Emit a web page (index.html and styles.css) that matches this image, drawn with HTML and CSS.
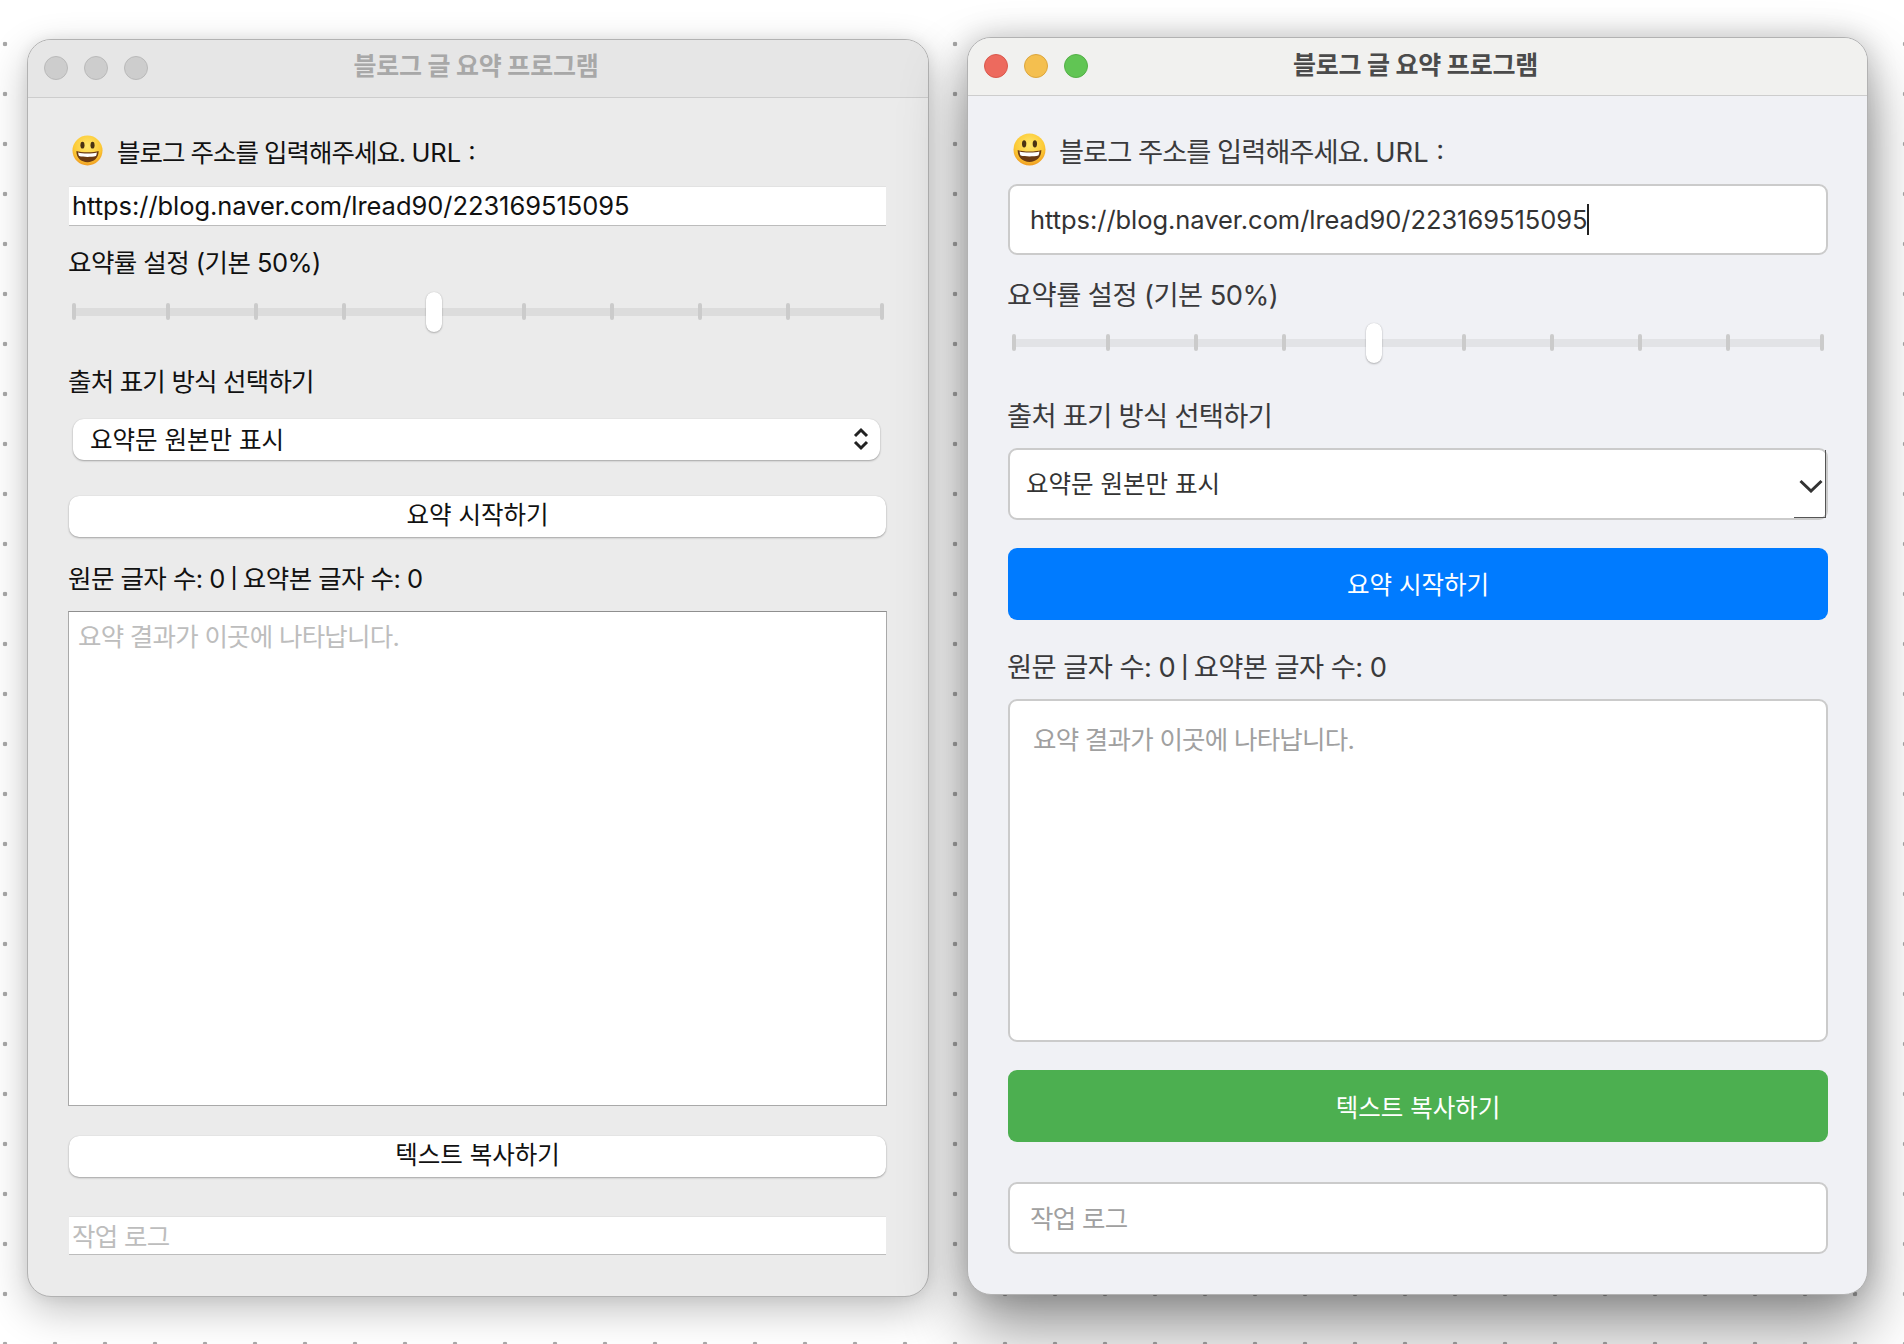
FILE: index.html
```html
<!DOCTYPE html>
<html lang="ko">
<head>
<meta charset="utf-8">
<title>블로그 글 요약 프로그램</title>
<link rel="stylesheet" href="styles.css">
</head>
<body>
<main class="desk">
  <section class="win win-a">
    <header class="bar">
      <div class="lights"><i class="light"></i><i class="light"></i><i class="light"></i></div>
      <h1 class="title">블로그 글 요약 프로그램</h1>
    </header>
    <div class="body">
      <div class="label-row url-label">
        <svg class="emoji" viewBox="0 0 32 32"><defs><radialGradient id="fa" cx=".5" cy=".35" r=".7"><stop offset="0" stop-color="#ffe86b"/><stop offset=".65" stop-color="#fcc935"/><stop offset="1" stop-color="#ec8f1c"/></radialGradient></defs><circle cx="16" cy="16" r="15.5" fill="url(#fa)"/><ellipse cx="10.8" cy="10.5" rx="2.1" ry="3.5" fill="#4a3313"/><ellipse cx="21.2" cy="10.5" rx="2.1" ry="3.5" fill="#4a3313"/><path d="M4.5 16.5C9 18.4 23 18.4 27.5 16.5 27.6 23.6 22.6 28 16 28S4.4 23.6 4.5 16.5Z" fill="#6b3a12"/><path d="M6.4 18C10 19.3 22 19.3 25.6 18 25.5 19.8 25.2 20.8 24.6 21.8 20 23 12 23 7.4 21.8 6.8 20.8 6.5 19.8 6.4 18Z" fill="#fff"/></svg>
        <span>블로그 주소를 입력해주세요. <span class="latin">URL :</span></span>
      </div>
      <input class="field url" type="text" value="https://blog.naver.com/lread90/223169515095">
      <div class="label-row rate-label">요약률 설정 (기본 50%)</div>
      <div class="slider">
        <div class="track"></div>
        <div class="ticks"><i class="tick"></i><i class="tick"></i><i class="tick"></i><i class="tick"></i><i class="tick"></i><i class="tick"></i><i class="tick"></i><i class="tick"></i><i class="tick"></i><i class="tick"></i></div>
        <div class="thumb"></div>
      </div>
      <div class="label-row source-label">출처 표기 방식 선택하기</div>
      <div class="select-wrap">
        <select class="select"><option>요약문 원본만 표시</option></select>
        <svg class="updown" viewBox="0 0 16 24"><path d="M2 9 8 3l6 6M2 15l6 6 6-6" fill="none" stroke="#222" stroke-width="3"/></svg>
      </div>
      <button class="btn start" type="button">요약 시작하기</button>
      <div class="label-row count">원문 글자 수: 0 <span class="pipe">|</span> 요약본 글자 수: 0</div>
      <textarea class="result" placeholder="요약 결과가 이곳에 나타납니다."></textarea>
      <button class="btn copy" type="button">텍스트 복사하기</button>
      <input class="field log" type="text" placeholder="작업 로그">
    </div>
  </section>

  <section class="win win-b">
    <header class="bar">
      <div class="lights"><i class="light red"></i><i class="light yellow"></i><i class="light green"></i></div>
      <h1 class="title">블로그 글 요약 프로그램</h1>
    </header>
    <div class="body">
      <div class="label-row url-label">
        <svg class="emoji" viewBox="0 0 32 32"><defs><radialGradient id="fb" cx=".5" cy=".35" r=".7"><stop offset="0" stop-color="#ffe86b"/><stop offset=".65" stop-color="#fcc935"/><stop offset="1" stop-color="#ec8f1c"/></radialGradient></defs><circle cx="16" cy="16" r="15.5" fill="url(#fb)"/><ellipse cx="10.8" cy="10.5" rx="2.1" ry="3.5" fill="#4a3313"/><ellipse cx="21.2" cy="10.5" rx="2.1" ry="3.5" fill="#4a3313"/><path d="M4.5 16.5C9 18.4 23 18.4 27.5 16.5 27.6 23.6 22.6 28 16 28S4.4 23.6 4.5 16.5Z" fill="#6b3a12"/><path d="M6.4 18C10 19.3 22 19.3 25.6 18 25.5 19.8 25.2 20.8 24.6 21.8 20 23 12 23 7.4 21.8 6.8 20.8 6.5 19.8 6.4 18Z" fill="#fff"/></svg>
        <span>블로그 주소를 입력해주세요. <span class="latin">URL :</span></span>
      </div>
      <div class="url-wrap">
        <input class="field url" type="text" value="https://blog.naver.com/lread90/223169515095">
        <i class="caret"></i>
      </div>
      <div class="label-row rate-label">요약률 설정 (기본 50%)</div>
      <div class="slider">
        <div class="track"></div>
        <div class="ticks"><i class="tick"></i><i class="tick"></i><i class="tick"></i><i class="tick"></i><i class="tick"></i><i class="tick"></i><i class="tick"></i><i class="tick"></i><i class="tick"></i><i class="tick"></i></div>
        <div class="thumb"></div>
      </div>
      <div class="label-row source-label">출처 표기 방식 선택하기</div>
      <div class="select-wrap">
        <select class="select"><option>요약문 원본만 표시</option></select>
        <i class="corner"></i>
        <svg class="chev" viewBox="0 0 24 14"><path d="M1.5 2 12 12 22.5 2" fill="none" stroke="#333" stroke-width="3"/></svg>
      </div>
      <button class="btn start" type="button">요약 시작하기</button>
      <div class="label-row count">원문 글자 수: 0 <span class="pipe">|</span> 요약본 글자 수: 0</div>
      <textarea class="result" placeholder="요약 결과가 이곳에 나타납니다."></textarea>
      <button class="btn copy" type="button">텍스트 복사하기</button>
      <input class="field log" type="text" placeholder="작업 로그">
    </div>
  </section>
</main>
</body>
</html>
```
FILE: styles.css
```css
* { box-sizing: border-box; }
html, body { margin: 0; height: 100%; overflow: hidden; }
body {
  background-color: #fff;
  background-image: radial-gradient(circle at 5px 44px, #a8a8a8 2px, transparent 2.6px);
  background-size: 50px 50px;
  font-family: "Inter", "Noto Sans CJK KR", sans-serif;
}
.desk { display: flex; align-items: flex-start; padding-left: 27px; }

.win { display: flex; flex-direction: column; border: 1px solid #b2b2b2; border-radius: 24px; overflow: hidden; position: relative; }
.win-a { width: 902px; height: 1258px; margin-top: 39px; background: #ebebeb; color: #111; box-shadow: 0 14px 40px rgba(0,0,0,.24), 0 0 14px rgba(0,0,0,.08); }
.win-b { width: 901px; height: 1258px; margin-top: 37px; margin-left: 38px; background: #f0f1f5; color: #3a3a3c; z-index: 1; box-shadow: 0 34px 64px rgba(0,0,0,.42), 0 0 30px rgba(0,0,0,.2); }

.bar { flex: none; height: 58px; display: flex; align-items: center; justify-content: center; position: relative; border-bottom: 1px solid #cdcdcd; }
.win-a .bar { background: #e6e6e6; }
.win-b .bar { background: #f1f1ef; }
.lights { position: absolute; left: 16px; top: 16px; display: flex; gap: 16px; }
.light { width: 24px; height: 24px; border-radius: 50%; background: #cdcdcd; border: 1px solid #b9b9b9; }
.light.red { background: #ed6a5e; border-color: #d9584c; }
.light.yellow { background: #f4bf4f; border-color: #dca63c; }
.light.green { background: #61c554; border-color: #53b046; }
.title { margin: -2px 4px 0 0; font-size: 25px; font-weight: 700; line-height: 1; letter-spacing: -.2px; }
.win-a .title { color: #a8a8a8; margin-top: -4px; }
.win-b .title { color: #4b4b4b; }

.body { flex: 1; display: flex; flex-direction: column; }
.win-a .body { padding: 38px 42px 0 41px; }
.win-b .body { padding: 38px 39px 0 40px; }

.label-row { height: 34px; display: flex; align-items: center; flex: none; white-space: nowrap; }
.win-a .label-row { font-size: 25.5px; padding-bottom: 5px; }
.win-b .label-row { font-size: 27.3px; padding-bottom: 3px; }
.url-label { letter-spacing: -1px; }
.latin { letter-spacing: 0; }
.rate-label, .source-label, .count { margin-left: -1px; }
.rate-label { letter-spacing: -.55px; }
.win-a .source-label { letter-spacing: -.8px; }
.win-b .source-label { letter-spacing: -.7px; }
.count { letter-spacing: -.55px; }
.pipe { display: inline-block; margin: 0 6px; font-family: "Liberation Sans", sans-serif; }
.emoji { flex: none; }
.win-a .emoji { width: 31px; height: 31px; margin: 0 14px 0 3px; }
.win-b .emoji { width: 33px; height: 33px; margin: 0 13px 0 5px; }

.field { display: block; width: 100%; flex: none; background: #fff; font: inherit; font-size: 25.5px; outline: 0; letter-spacing: -.05px; }
.field::placeholder { font: inherit; letter-spacing: -.7px; }
.win-a .field { border: 0; border-bottom: 1px solid #bcbcbc; border-top: 1px solid #e2e2e2; padding: 0 3px 2px; color: #111; }
.win-a .field::placeholder { color: #bdbdbd; }
.win-a .log { padding: 2px 3px 0; }
.win-b .field { border: 2px solid #cbcbcb; border-radius: 9px; padding: 0 20px; color: #333; }
.win-b .field::placeholder { color: #a0a0a0; }

.win-a .url { height: 40px; margin-top: 16px; }
.win-b .url-wrap { position: relative; margin-top: 16px; flex: none; }
.win-b .url { height: 71px; }
.caret { position: absolute; left: 579px; top: 20px; width: 2px; height: 31px; background: #222; }

.win-a .rate-label { margin-top: 20px; }
.win-b .rate-label { margin-top: 22px; }

.slider { position: relative; height: 40px; margin-top: 12px; flex: none; width: 812px; }
.win-a .slider { margin-left: 3px; }
.win-b .slider { margin-left: 4px; }
.track { position: absolute; left: 0; right: 0; top: 16px; height: 8px; }
.win-a .track { background: #dcdcdc; }
.win-b .track { background: #e2e3e6; }
.ticks { position: absolute; left: 0; top: 11px; display: flex; }
.tick { display: block; width: 4px; height: 17px; border-radius: 2px; background: #cbcbcb; margin-left: 84px; }
.tick:first-child { margin-left: 0; }
.tick:nth-child(2), .tick:last-child { margin-left: 90px; }
.tick:nth-child(5), .tick:nth-child(6) { margin-left: 86px; }
.thumb { position: absolute; left: 354px; top: 0; width: 16px; height: 40px; border-radius: 8px; background: #fff; box-shadow: 0 1px 2px rgba(0,0,0,.25), 0 0 1px rgba(0,0,0,.2); }

.win-a .source-label { margin-top: 33px; }
.win-b .source-label { margin-top: 35px; }

.select-wrap { position: relative; flex: none; }
.win-a .select-wrap { margin: 20px 6px 0 4px; height: 41px; }
.win-b .select-wrap { margin-top: 16px; height: 72px; }
.select { display: block; width: 100%; height: 100%; appearance: none; -webkit-appearance: none; background: #fff; font: inherit; font-size: 24.5px; outline: 0; }
.win-a .select { border: 0; border-radius: 11px; padding: 0 17px; color: #111; box-shadow: 0 1px 2px rgba(0,0,0,.3), 0 0 1px rgba(0,0,0,.15); }
.win-b .select { border: 2px solid #cbcbcb; border-radius: 9px; padding: 0 16px; color: #333; }
.updown { position: absolute; right: 11px; top: 8px; width: 16px; height: 24px; }
.chev { position: absolute; right: 5px; top: 31px; width: 24px; height: 14px; }
.corner { position: absolute; right: 2px; top: 2px; width: 32px; height: 68px; border-right: 1px solid #555; }
.corner::after { content: ""; position: absolute; left: 0; right: -1px; bottom: 0; height: 1px; background: #555; }

.btn { display: block; width: 100%; flex: none; font: inherit; font-size: 24.5px; cursor: pointer; }
.win-a .btn { height: 41px; border: 0; border-radius: 10px; background: #fff; color: #111; padding: 0 0 7px; box-shadow: 0 1px 2px rgba(0,0,0,.3), 0 0 1px rgba(0,0,0,.15); }
.win-b .btn { height: 72px; border: 0; border-radius: 9px; color: #fff; padding: 0 0 1px; }
.win-b .start { background: #007bff; }
.win-b .copy { background: #4caf50; padding: 1px 0 0; }
.win-a .start { margin-top: 36px; }
.win-b .start { margin-top: 28px; }
.win-a .count { margin-top: 25px; }
.win-b .count { margin-top: 29px; }

.result { display: block; width: 100%; flex: none; resize: none; background: #fff; font: inherit; font-size: 25.5px; outline: 0; }
.result::placeholder { font: inherit; letter-spacing: -.75px; }
.win-a .result { height: 495px; margin-top: 15px; border: 1px solid #a9a9a9; border-top-color: #8f8f8f; padding: 4px 9px; margin-left: -1px; width: 819px; }
.win-a .result::placeholder { color: #bdbdbd; }
.win-b .result { height: 343px; margin-top: 16px; border: 2px solid #cbcbcb; border-radius: 9px; padding: 18px 23px; }
.win-b .result::placeholder { color: #a0a0a0; }

.win-a .copy { margin-top: 30px; }
.win-b .copy { margin-top: 28px; }
.win-a .log { height: 39px; margin-top: 39px; }
.win-b .log { height: 72px; margin-top: 40px; }
```
